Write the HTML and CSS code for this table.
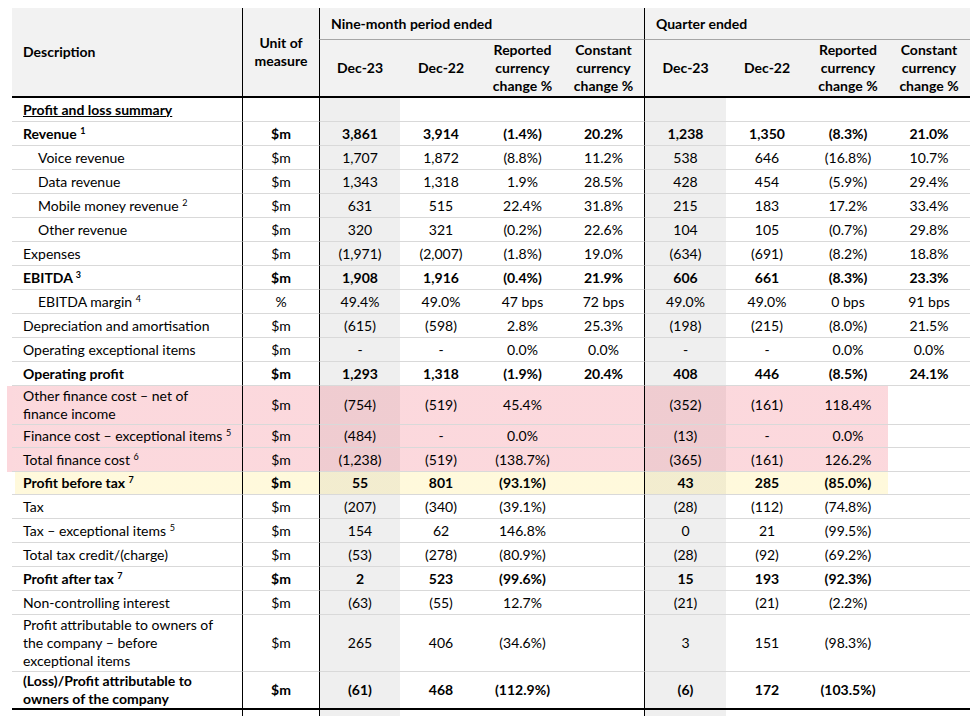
FILE: index.html
```html
<!DOCTYPE html>
<html lang="en">
<head>
<meta charset="utf-8">
<title>Profit and loss summary</title>
<link rel="stylesheet" href="styles.css">
</head>
<body>
<div class="page">
<table class="fin">
  <colgroup>
    <col class="c-desc"><col class="c-unit">
    <col class="c-a"><col class="c-b"><col class="c-a"><col class="c-a">
    <col class="c-b"><col class="c-b"><col class="c-c"><col class="c-b">
  </colgroup>
  <thead>
    <tr class="h1">
      <th rowspan="2" class="desc">Description</th>
      <th rowspan="2" class="unit">Unit of<br>measure</th>
      <th colspan="4" class="grp">Nine-month period ended</th>
      <th colspan="4" class="grp">Quarter ended</th>
    </tr>
    <tr class="h2">
      <th class="first">Dec-23</th>
      <th>Dec-22</th>
      <th>Reported<br>currency<br>change %</th>
      <th>Constant<br>currency<br>change %</th>
      <th class="first">Dec-23</th>
      <th>Dec-22</th>
      <th>Reported<br>currency<br>change %</th>
      <th>Constant<br>currency<br>change %</th>
    </tr>
  </thead>
  <tbody>
    <tr class="b"><td><span class="title">Profit and loss summary</span></td><td></td><td></td><td></td><td></td><td></td><td></td><td></td><td></td><td></td></tr>
    <tr class="b"><td>Revenue <sup>1</sup></td><td>$m</td><td>3,861</td><td>3,914</td><td>(1.4%)</td><td>20.2%</td><td>1,238</td><td>1,350</td><td>(8.3%)</td><td>21.0%</td></tr>
    <tr><td class="ind">Voice revenue</td><td>$m</td><td>1,707</td><td>1,872</td><td>(8.8%)</td><td>11.2%</td><td>538</td><td>646</td><td>(16.8%)</td><td>10.7%</td></tr>
    <tr><td class="ind">Data revenue</td><td>$m</td><td>1,343</td><td>1,318</td><td>1.9%</td><td>28.5%</td><td>428</td><td>454</td><td>(5.9%)</td><td>29.4%</td></tr>
    <tr><td class="ind">Mobile money revenue <sup>2</sup></td><td>$m</td><td>631</td><td>515</td><td>22.4%</td><td>31.8%</td><td>215</td><td>183</td><td>17.2%</td><td>33.4%</td></tr>
    <tr><td class="ind">Other revenue</td><td>$m</td><td>320</td><td>321</td><td>(0.2%)</td><td>22.6%</td><td>104</td><td>105</td><td>(0.7%)</td><td>29.8%</td></tr>
    <tr><td>Expenses</td><td>$m</td><td>(1,971)</td><td>(2,007)</td><td>(1.8%)</td><td>19.0%</td><td>(634)</td><td>(691)</td><td>(8.2%)</td><td>18.8%</td></tr>
    <tr class="b"><td>EBITDA <sup>3</sup></td><td>$m</td><td>1,908</td><td>1,916</td><td>(0.4%)</td><td>21.9%</td><td>606</td><td>661</td><td>(8.3%)</td><td>23.3%</td></tr>
    <tr><td class="ind">EBITDA margin <sup>4</sup></td><td>%</td><td>49.4%</td><td>49.0%</td><td>47 bps</td><td>72 bps</td><td>49.0%</td><td>49.0%</td><td>0 bps</td><td>91 bps</td></tr>
    <tr><td>Depreciation and amortisation</td><td>$m</td><td>(615)</td><td>(598)</td><td>2.8%</td><td>25.3%</td><td>(198)</td><td>(215)</td><td>(8.0%)</td><td>21.5%</td></tr>
    <tr><td>Operating exceptional items</td><td>$m</td><td>-</td><td>-</td><td>0.0%</td><td>0.0%</td><td>-</td><td>-</td><td>0.0%</td><td>0.0%</td></tr>
    <tr class="b"><td>Operating profit</td><td>$m</td><td>1,293</td><td>1,318</td><td>(1.9%)</td><td>20.4%</td><td>408</td><td>446</td><td>(8.5%)</td><td>24.1%</td></tr>
    <tr class="hl-r r-two"><td>Other finance cost – net of<br>finance income</td><td>$m</td><td>(754)</td><td>(519)</td><td>45.4%</td><td></td><td>(352)</td><td>(161)</td><td>118.4%</td><td></td></tr>
    <tr class="hl-r r-short"><td>Finance cost – exceptional items <sup>5</sup></td><td>$m</td><td>(484)</td><td>-</td><td>0.0%</td><td></td><td>(13)</td><td>-</td><td>0.0%</td><td></td></tr>
    <tr class="hl-r"><td>Total finance cost <sup>6</sup></td><td>$m</td><td>(1,238)</td><td>(519)</td><td>(138.7%)</td><td></td><td>(365)</td><td>(161)</td><td>126.2%</td><td></td></tr>
    <tr class="b hl-y r-short"><td>Profit before tax <sup>7</sup></td><td>$m</td><td>55</td><td>801</td><td>(93.1%)</td><td></td><td>43</td><td>285</td><td>(85.0%)</td><td></td></tr>
    <tr><td>Tax</td><td>$m</td><td>(207)</td><td>(340)</td><td>(39.1%)</td><td></td><td>(28)</td><td>(112)</td><td>(74.8%)</td><td></td></tr>
    <tr><td>Tax – exceptional items <sup>5</sup></td><td>$m</td><td>154</td><td>62</td><td>146.8%</td><td></td><td>0</td><td>21</td><td>(99.5%)</td><td></td></tr>
    <tr><td>Total tax credit/(charge)</td><td>$m</td><td>(53)</td><td>(278)</td><td>(80.9%)</td><td></td><td>(28)</td><td>(92)</td><td>(69.2%)</td><td></td></tr>
    <tr class="b"><td>Profit after tax <sup>7</sup></td><td>$m</td><td>2</td><td>523</td><td>(99.6%)</td><td></td><td>15</td><td>193</td><td>(92.3%)</td><td></td></tr>
    <tr><td>Non-controlling interest</td><td>$m</td><td>(63)</td><td>(55)</td><td>12.7%</td><td></td><td>(21)</td><td>(21)</td><td>(2.2%)</td><td></td></tr>
    <tr class="r-three"><td>Profit attributable to owners of<br>the company – before<br>exceptional items</td><td>$m</td><td>265</td><td>406</td><td>(34.6%)</td><td></td><td>3</td><td>151</td><td>(98.3%)</td><td></td></tr>
    <tr class="b end"><td>(Loss)/Profit attributable to<br>owners of the company</td><td>$m</td><td>(61)</td><td>468</td><td>(112.9%)</td><td></td><td>(6)</td><td>172</td><td>(103.5%)</td><td></td></tr>
    <tr class="filler"><td></td><td></td><td></td><td></td><td></td><td></td><td></td><td></td><td></td><td></td></tr>
  </tbody>
</table>
</div>
</body>
</html>
```

FILE: styles.css
```css
* {
  box-sizing: border-box;
}

html,
body {
  margin: 0;
  padding: 0;
  background: #ffffff;
}

body {
  font-family: Lato, "Liberation Sans", sans-serif;
  font-size: 14px;
  color: #000000;
}

.page {
  width: 970px;
  height: 716px;
  overflow: hidden;
  padding: 8px 0 0 12px;
}

.fin {
  border-collapse: separate;
  border-spacing: 0;
  table-layout: fixed;
  width: 958px;
  line-height: 18px;
}

.c-desc { width: 230px; }
.c-unit { width: 77px; }
.c-a { width: 81px; }
.c-b { width: 82px; }
.c-c { width: 80px; }

.fin th,
.fin td {
  padding: 0;
  text-align: center;
  vertical-align: middle;
  font-weight: 400;
  white-space: nowrap;
}

/* Header */
.fin thead th {
  background: #f2f2f2;
  font-weight: 700;
}

.h1 { height: 32px; }
.h2 { height: 58px; }

.fin th.desc {
  text-align: left;
  padding-left: 11px;
  border-bottom: 2px solid #000;
}

.fin th.unit {
  border-left: 1px solid #000;
  border-bottom: 2px solid #000;
}

.fin th.grp {
  text-align: left;
  padding-left: 11px;
  border-left: 1px solid #000;
  border-bottom: 1px solid #a6a6a6;
}

.h2 th {
  border-bottom: 2px solid #000;
}

.h2 th.first {
  border-left: 1px solid #000;
}

/* Body */
.fin tbody tr { height: 24px; }
.fin tbody tr.r-short { height: 23px; }
.fin tbody tr.r-two { height: 39px; }
.fin tbody tr.r-three { height: 57px; }
.fin tbody tr.end { height: 38px; }
.fin tbody tr.filler { height: 20px; }

.fin tbody td {
  border-bottom: 1px solid #d9d9d9;
}

.fin tbody td:first-child {
  text-align: left;
  padding-left: 11px;
}

.fin tbody td.ind {
  padding-left: 26px;
}

.fin tbody td:nth-child(2) {
  border-left: 1px solid #000;
}

.fin tbody td:nth-child(3),
.fin tbody td:nth-child(7) {
  border-left: 1px solid #000;
  background-color: #efefef;
}

.fin tbody tr.b td {
  font-weight: 700;
}

.title {
  text-decoration: underline;
}

.fin sup {
  font-size: 9px;
  line-height: 0;
  vertical-align: 5px;
}

.fin tbody tr.end td {
  border-bottom: 2px solid #000;
}

.fin tbody tr.filler td {
  border-bottom: none;
}

/* Highlighted rows */
.fin tbody tr.hl-r td:not(:last-child) {
  background-image: linear-gradient(rgba(240, 80, 100, 0.22), rgba(240, 80, 100, 0.22));
}

.fin tbody tr.hl-r td:first-child {
  box-shadow: -5px 0 0 rgb(252, 216, 221);
}

.fin tbody tr.hl-y td:not(:last-child) {
  background-image: linear-gradient(rgba(255, 228, 95, 0.22), rgba(255, 228, 95, 0.22));
}

.fin tbody tr.hl-y td:first-child {
  background-image: linear-gradient(to right, transparent 3px, rgba(255, 228, 95, 0.22) 3px);
}
```
